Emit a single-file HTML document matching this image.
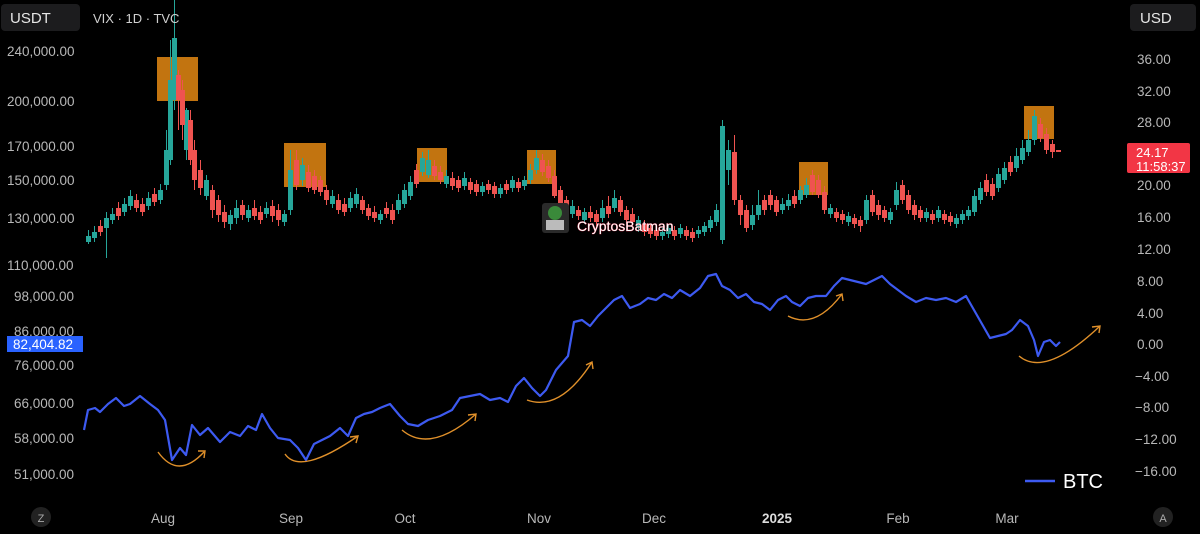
<!DOCTYPE html>
<html><head><meta charset="utf-8">
<style>
html,body{margin:0;padding:0;background:#000;}
body{width:1200px;height:529px;overflow:hidden;font-family:"Liberation Sans",sans-serif;}
svg text{font-family:"Liberation Sans",sans-serif;}
</style></head><body>
<svg width="1200" height="529" viewBox="0 0 1200 529" xmlns="http://www.w3.org/2000/svg">
<rect width="1200" height="529" fill="#000"/>
<g fill="#c27410">
<rect x="157" y="57" width="41" height="44"/>
<rect x="284" y="143" width="42" height="44"/>
<rect x="417" y="148" width="30" height="34"/>
<rect x="527" y="150" width="29" height="34"/>
<rect x="799" y="162" width="29" height="33"/>
<rect x="1024" y="106" width="30" height="33"/>
</g>
<path fill="#26a69a" d="M86 236h5v6h-5zM88 230h1v14h-1zM92 232h5v6h-5zM94 226h1v16h-1zM104 218h5v10h-5zM106 212h1v46h-1zM110 214h5v6h-5zM112 208h1v16h-1zM122 204h5v8h-5zM124 198h1v18h-1zM128 196h5v10h-5zM130 190h1v20h-1zM146 198h5v8h-5zM148 192h1v18h-1zM158 190h5v10h-5zM160 184h1v20h-1zM164 150h5v35h-5zM166 130h1v60h-1zM168 80h5v80h-5zM170 40h1v125h-1zM172 38h5v62h-5zM174 0h1v110h-1zM184 110h5v40h-5zM186 108h1v52h-1zM204 180h5v16h-5zM206 175h1v25h-1zM228 215h5v9h-5zM230 210h1v20h-1zM234 208h5v10h-5zM236 200h1v24h-1zM246 210h5v8h-5zM248 205h1v17h-1zM264 208h5v6h-5zM266 202h1v16h-1zM282 214h5v8h-5zM284 210h1v16h-1zM288 170h5v40h-5zM290 150h1v65h-1zM300 165h5v15h-5zM302 158h1v28h-1zM330 196h5v8h-5zM332 190h1v18h-1zM348 198h5v10h-5zM350 192h1v20h-1zM354 194h5v10h-5zM356 188h1v20h-1zM378 214h5v6h-5zM380 210h1v14h-1zM396 200h5v10h-5zM398 194h1v20h-1zM402 190h5v14h-5zM404 184h1v24h-1zM408 182h5v14h-5zM410 176h1v24h-1zM420 158h5v14h-5zM422 152h1v24h-1zM426 160h5v15h-5zM428 150h1v28h-1zM444 176h5v8h-5zM446 170h1v18h-1zM462 178h5v8h-5zM464 172h1v18h-1zM480 186h5v6h-5zM482 182h1v14h-1zM498 188h5v6h-5zM500 184h1v14h-1zM510 180h5v8h-5zM512 176h1v16h-1zM522 180h5v6h-5zM524 176h1v14h-1zM528 170h5v10h-5zM530 164h1v20h-1zM534 158h5v12h-5zM536 150h1v24h-1zM570 206h5v8h-5zM572 200h1v18h-1zM582 212h5v8h-5zM584 208h1v16h-1zM600 208h5v10h-5zM602 200h1v22h-1zM612 198h5v10h-5zM614 190h1v22h-1zM636 220h5v8h-5zM638 216h1v16h-1zM660 232h5v4h-5zM662 228h1v12h-1zM666 228h5v6h-5zM668 224h1v14h-1zM678 228h5v6h-5zM680 224h1v14h-1zM696 230h5v4h-5zM698 226h1v12h-1zM702 226h5v6h-5zM704 222h1v14h-1zM708 220h5v8h-5zM710 216h1v16h-1zM714 210h5v12h-5zM716 204h1v22h-1zM720 126h5v114h-5zM722 120h1v124h-1zM726 150h5v20h-5zM728 140h1v45h-1zM750 215h5v10h-5zM752 205h1v25h-1zM756 205h5v10h-5zM758 190h1v30h-1zM780 204h5v6h-5zM782 198h1v16h-1zM786 200h5v6h-5zM788 194h1v16h-1zM798 190h5v10h-5zM800 186h1v18h-1zM804 185h5v10h-5zM806 178h1v20h-1zM828 208h5v6h-5zM830 204h1v14h-1zM846 216h5v6h-5zM848 212h1v14h-1zM864 200h5v20h-5zM866 195h1v29h-1zM888 212h5v8h-5zM890 208h1v16h-1zM894 190h5v15h-5zM896 182h1v28h-1zM924 212h5v6h-5zM926 208h1v14h-1zM936 210h5v8h-5zM938 206h1v16h-1zM954 218h5v6h-5zM956 214h1v14h-1zM960 214h5v6h-5zM962 210h1v14h-1zM966 210h5v6h-5zM968 206h1v14h-1zM972 196h5v16h-5zM974 190h1v26h-1zM978 188h5v12h-5zM980 182h1v22h-1zM996 174h5v14h-5zM998 168h1v24h-1zM1002 168h5v12h-5zM1004 162h1v22h-1zM1014 156h5v12h-5zM1016 148h1v24h-1zM1020 148h5v12h-5zM1022 140h1v24h-1zM1026 140h5v12h-5zM1028 130h1v26h-1zM1032 116h5v24h-5zM1034 110h1v35h-1z"/>
<path fill="#ef5350" d="M98 226h5v6h-5zM100 220h1v16h-1zM116 208h5v8h-5zM118 202h1v18h-1zM134 200h5v8h-5zM136 194h1v18h-1zM140 204h5v8h-5zM142 198h1v18h-1zM152 194h5v8h-5zM154 188h1v18h-1zM176 75h5v25h-5zM178 70h1v60h-1zM180 90h5v35h-5zM182 80h1v60h-1zM188 120h5v40h-5zM190 110h1v55h-1zM192 150h5v30h-5zM194 140h1v50h-1zM198 170h5v18h-5zM200 160h1v35h-1zM210 190h5v20h-5zM212 185h1v33h-1zM216 200h5v15h-5zM218 195h1v27h-1zM222 212h5v10h-5zM224 205h1v23h-1zM240 205h5v10h-5zM242 200h1v20h-1zM252 208h5v8h-5zM254 200h1v20h-1zM258 212h5v8h-5zM260 206h1v18h-1zM270 206h5v10h-5zM272 200h1v22h-1zM276 210h5v10h-5zM278 204h1v22h-1zM294 160h5v25h-5zM296 150h1v40h-1zM306 172h5v16h-5zM308 165h1v27h-1zM312 176h5v14h-5zM314 170h1v24h-1zM318 180h5v12h-5zM320 176h1v20h-1zM324 190h5v10h-5zM326 185h1v20h-1zM336 200h5v10h-5zM338 194h1v20h-1zM342 204h5v8h-5zM344 198h1v18h-1zM360 200h5v10h-5zM362 196h1v18h-1zM366 208h5v8h-5zM368 204h1v16h-1zM372 212h5v6h-5zM374 206h1v16h-1zM384 208h5v6h-5zM386 202h1v16h-1zM390 210h5v10h-5zM392 204h1v20h-1zM414 170h5v14h-5zM416 164h1v24h-1zM432 166h5v10h-5zM434 160h1v20h-1zM438 172h5v8h-5zM440 166h1v18h-1zM450 178h5v8h-5zM452 172h1v18h-1zM456 180h5v8h-5zM458 176h1v16h-1zM468 182h5v8h-5zM470 178h1v16h-1zM474 184h5v8h-5zM476 180h1v16h-1zM486 184h5v6h-5zM488 180h1v14h-1zM492 186h5v8h-5zM494 182h1v16h-1zM504 184h5v6h-5zM506 180h1v14h-1zM516 182h5v6h-5zM518 178h1v14h-1zM540 160h5v12h-5zM542 154h1v22h-1zM546 166h5v12h-5zM548 160h1v22h-1zM552 176h5v20h-5zM554 170h1v28h-1zM558 190h5v16h-5zM560 186h1v24h-1zM564 200h5v12h-5zM566 196h1v20h-1zM576 210h5v6h-5zM578 206h1v14h-1zM588 212h5v6h-5zM590 206h1v16h-1zM594 214h5v8h-5zM596 210h1v16h-1zM606 206h5v8h-5zM608 196h1v22h-1zM618 200h5v12h-5zM620 196h1v20h-1zM624 210h5v10h-5zM626 206h1v18h-1zM630 214h5v8h-5zM632 208h1v18h-1zM642 224h5v8h-5zM644 220h1v16h-1zM648 228h5v6h-5zM650 224h1v14h-1zM654 230h5v6h-5zM656 226h1v14h-1zM672 230h5v6h-5zM674 226h1v14h-1zM684 230h5v6h-5zM686 226h1v14h-1zM690 232h5v6h-5zM692 228h1v14h-1zM732 152h5v48h-5zM734 135h1v70h-1zM738 200h5v15h-5zM740 195h1v30h-1zM744 210h5v18h-5zM746 205h1v27h-1zM762 200h5v10h-5zM764 195h1v20h-1zM768 195h5v10h-5zM770 190h1v20h-1zM774 200h5v12h-5zM776 196h1v20h-1zM792 196h5v8h-5zM794 190h1v18h-1zM810 175h5v17h-5zM812 170h1v25h-1zM816 180h5v15h-5zM818 175h1v23h-1zM822 192h5v18h-5zM824 186h1v28h-1zM834 212h5v6h-5zM836 208h1v14h-1zM840 214h5v6h-5zM842 210h1v14h-1zM852 218h5v6h-5zM854 214h1v14h-1zM858 220h5v6h-5zM860 216h1v16h-1zM870 195h5v17h-5zM872 190h1v26h-1zM876 205h5v10h-5zM878 200h1v20h-1zM882 210h5v8h-5zM884 206h1v16h-1zM900 185h5v15h-5zM902 180h1v24h-1zM906 195h5v15h-5zM908 190h1v24h-1zM912 205h5v10h-5zM914 200h1v20h-1zM918 210h5v8h-5zM920 206h1v16h-1zM930 214h5v6h-5zM932 210h1v14h-1zM942 214h5v6h-5zM944 210h1v14h-1zM948 216h5v6h-5zM950 212h1v14h-1zM984 180h5v12h-5zM986 174h1v22h-1zM990 184h5v12h-5zM992 178h1v22h-1zM1008 162h5v10h-5zM1010 156h1v20h-1zM1038 124h5v14h-5zM1040 118h1v24h-1zM1044 134h5v16h-5zM1046 128h1v26h-1zM1050 144h5v8h-5zM1052 140h1v18h-1zM1056 150h5v2h-5z"/>
<polyline fill="none" stroke="#3d5af1" stroke-width="2.2" stroke-linejoin="round" points="84,430 88,410 95,408 100,412 108,404 116,398 124,406 130,404 140,396 150,404 158,410 165,420 172,460 180,448 186,455 192,425 200,435 208,428 220,442 230,432 240,436 248,426 256,430 262,414 270,428 278,438 290,440 298,448 306,460 314,444 322,440 330,436 340,428 348,436 356,418 364,414 372,412 380,408 390,404 400,416 408,424 418,426 428,420 440,416 452,410 460,398 470,396 480,394 490,400 500,398 508,402 516,386 524,378 532,388 540,396 546,390 556,370 568,356 574,322 582,320 590,326 598,316 606,308 614,300 622,296 630,308 640,304 648,298 656,300 664,294 672,298 680,290 690,296 700,288 708,276 716,274 722,286 730,290 738,298 746,294 754,302 762,304 770,310 778,300 786,296 792,302 800,306 808,298 816,296 826,296 834,286 842,278 850,280 858,282 866,284 874,280 882,276 890,284 898,290 906,296 916,302 926,298 936,300 946,298 956,302 966,296 974,310 982,324 990,338 998,336 1006,334 1012,330 1020,320 1028,326 1034,340 1038,356 1044,342 1050,340 1056,346 1060,342"/>
<g fill="none" stroke="#e0902a" stroke-width="1.4">
<path d="M158 452 Q178 480 204 452"/><path d="M198 451 L205 451 L204 458"/>
<path d="M285 454 Q300 476 358 436"/><path d="M350 437 L358 436 L356 443"/>
<path d="M402 430 Q430 454 476 414"/><path d="M468 415 L476 414 L475 421"/>
<path d="M527 400 Q560 412 592 362"/><path d="M586 365 L592 362 L593 369"/>
<path d="M788 316 Q815 330 842 294"/><path d="M836 296 L842 294 L843 301"/>
<path d="M1019 356 Q1045 378 1100 326"/><path d="M1092 327 L1100 326 L1099 333"/>
</g>
<rect x="1" y="4" width="79" height="27" rx="4" fill="#1c1c1e"/>
<text x="10" y="23" fill="#e6e6e6" font-size="15">USDT</text>
<text x="93" y="23" fill="#d0d0d0" font-size="13">VIX · 1D · TVC</text>
<rect x="1130" y="4" width="66" height="27" rx="4" fill="#1c1c1e"/>
<text x="1140" y="23" fill="#e6e6e6" font-size="15">USD</text>
<g fill="#b8b8b8" font-size="13.5">
<text x="7" y="56">240,000.00</text><text x="7" y="106">200,000.00</text><text x="7" y="151">170,000.00</text>
<text x="7" y="185">150,000.00</text><text x="7" y="223">130,000.00</text><text x="7" y="270">110,000.00</text>
<text x="14" y="301">98,000.00</text><text x="14" y="336">86,000.00</text><text x="14" y="370">76,000.00</text>
<text x="14" y="408">66,000.00</text><text x="14" y="443">58,000.00</text><text x="14" y="479">51,000.00</text>
</g>
<rect x="7" y="336" width="76" height="16" fill="#2962ff"/>
<text x="13" y="349" fill="#fff" font-size="13.5">82,404.82</text>
<g fill="#b8b8b8" font-size="13.5">
<text x="1137" y="64">36.00</text><text x="1137" y="96">32.00</text><text x="1137" y="127">28.00</text>
<text x="1137" y="190">20.00</text><text x="1137" y="222">16.00</text><text x="1137" y="254">12.00</text>
<text x="1137" y="286">8.00</text><text x="1137" y="318">4.00</text><text x="1137" y="349">0.00</text>
<text x="1135" y="381">−4.00</text><text x="1135" y="412">−8.00</text><text x="1135" y="444">−12.00</text><text x="1135" y="476">−16.00</text>
</g>
<rect x="1127" y="143" width="63" height="30" rx="2" fill="#f23645"/>
<text x="1136" y="157" fill="#fff" font-size="13">24.17</text>
<text x="1136" y="171" fill="#fff" font-size="13">11:58:37</text>
<rect x="542" y="203" width="27" height="30" rx="3" fill="#2a2a2a"/>
<circle cx="555" cy="213" r="7" fill="#3a8a3a"/>
<rect x="546" y="220" width="18" height="10" fill="#bbb"/>
<text x="577" y="231" fill="#fff" font-size="14" stroke="#e0304a" stroke-width="0.6" paint-order="stroke">CryptosBatman</text>
<line x1="1025" y1="481" x2="1055" y2="481" stroke="#3d5af1" stroke-width="2.5"/>
<text x="1063" y="488" fill="#fff" font-size="20">BTC</text>
<g fill="#b8b8b8" font-size="13.5" text-anchor="middle">
<text x="163" y="523">Aug</text><text x="291" y="523">Sep</text><text x="405" y="523">Oct</text>
<text x="539" y="523">Nov</text><text x="654" y="523">Dec</text><text x="777" y="523" font-weight="bold" fill="#ddd">2025</text>
<text x="898" y="523">Feb</text><text x="1007" y="523">Mar</text>
</g>
<circle cx="41" cy="517" r="10" fill="#222"/><text x="41" y="522" fill="#aaa" font-size="11" text-anchor="middle">Z</text>
<circle cx="1163" cy="517" r="10" fill="#222"/><text x="1163" y="522" fill="#aaa" font-size="11" text-anchor="middle">A</text>
</svg>
</body></html>
